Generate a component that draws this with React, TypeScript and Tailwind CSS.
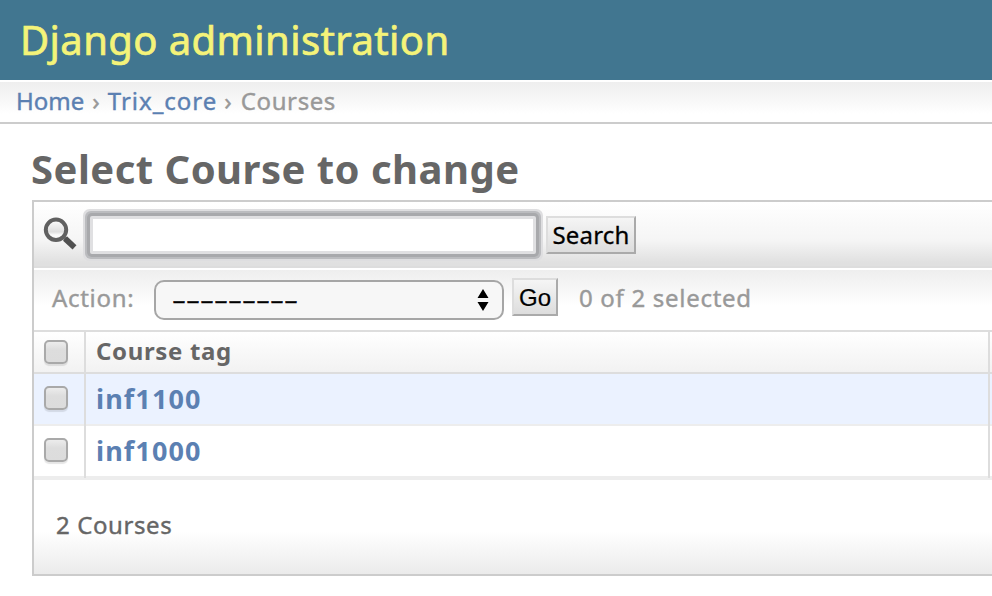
const font = "font-['Lucida_Grande','Noto_Sans',sans-serif]";

function Check() {
  return (
    <span className="block h-6 w-6 rounded-[5px] border-2 border-[#a9a9a9] bg-linear-to-b from-[#ececec] via-[#dddddd] via-40% to-[#dcdcdc] shadow-[0_2px_1px_rgba(0,0,0,0.1)]" />
  );
}

function SearchIcon() {
  return (
    <svg className="ml-[9px] block h-9 w-9 shrink-0" viewBox="0 0 36 36" fill="none">
      <defs>
        <linearGradient id="lens" x1="0" y1="0" x2="0" y2="1">
          <stop offset="0" stopColor="#fff" />
          <stop offset="0.6" stopColor="#dedede" />
          <stop offset="0.75" stopColor="#fafafa" />
        </linearGradient>
      </defs>
      <path d="M19.5 20l4 4" stroke="#777" strokeWidth="3.5" />
      <path d="M22 22.5l9.5 8.8" stroke="#505050" strokeWidth="5.8" />
      <circle cx="13" cy="13.8" r="10.2" fill="url(#lens)" stroke="#606060" strokeWidth="4" />
    </svg>
  );
}

function Row({ name, className }: { name: string; className: string }) {
  return (
    <div className={`flex h-[52px] border-b-2 border-[#ededed] ${className}`}>
      <div className="-mb-0.5 flex w-[52px] border-r-2 border-[#dddddd] pt-3 pl-2.5">
        <Check />
      </div>
      <div className="-mb-0.5 w-[904px] border-r-2 border-[#dddddd] pl-2.5 text-[27px] leading-[49px] font-bold tracking-[1.1px] text-[#5b80b2]">
        {name}
      </div>
    </div>
  );
}

export default function App() {
  return (
    <div className={`h-[596px] w-[992px] overflow-hidden bg-white whitespace-nowrap text-[#666666] ${font}`}>
      <header className="h-20 bg-[#417690] pl-5 text-[40px] leading-[80px] text-[#f4f379] [-webkit-text-stroke:0.7px]">
        <span className="tracking-[0.4px]">Django administration</span>
      </header>
      <nav className="mt-0.5 flex h-[42px] border-b-2 border-[#cccccc] bg-linear-to-b from-[#eeeeee] to-white to-80% pl-4 text-[24px] leading-[38px] text-[#999999] [-webkit-text-stroke:0.4px]">
        <span className="text-[#5b80b2]">Home</span>
        <span className="pr-[8px] pl-[8px]">›</span>
        <span className="tracking-[1px] text-[#5b80b2]">Trix_core</span>
        <span className="pr-[9px] pl-[7px]">›</span>
        <span className="tracking-[0.6px]">Courses</span>
      </nav>
      <h1 className="mt-[15px] h-[61px] pl-[31px] text-[40px] leading-[60px] font-bold tracking-[0.48px]">Select Course to change</h1>
      <main className="ml-8 h-[376px] border-2 border-r-0 border-[#cccccc]">
        <div className="flex h-[66px] border-b-2 border-[#dddddd] bg-linear-to-b from-white via-[#f5f5f5] via-60% to-[#e0e0e0] to-95%">
          <div className="pt-[14px]"><SearchIcon /></div>
          <div className="mt-[14px] ml-[11px] h-[38px] w-[446px] rounded-[2px] border-3 border-[#e0e0e2] bg-white shadow-[0_0_0_3px_#a8a9ac,0_0_0_5px_#bbbcbf,0_0_0_7px_#dedee0]" />
          <button className="mt-[14px] ml-2.5 h-[38px] w-[90px] border-2 border-[#dddddd] border-r-[#aaaaaa] border-b-[#aaaaaa] bg-linear-to-b from-[#f5f5f5] to-[#dddddd] text-[24px] leading-[34px] tracking-[0.2px] text-black [-webkit-text-stroke:0.3px]">
            Search
          </button>
        </div>
        <div className="mt-0.5 flex h-[62px] border-b-2 border-[#dddddd] bg-linear-to-b from-[#eeeeee] to-white to-60% text-[24px] leading-[56px] text-[#999999] [-webkit-text-stroke:0.4px]">
          <span className="w-[120px] pl-[18px] tracking-[0.7px]">Action:</span>
          <div className="mt-2.5 flex h-10 w-[350px] justify-between rounded-[10px] border-2 border-[#a6a6a6] bg-[#f7f7f7] pr-[13px] pl-4 text-black">
            <span className="origin-left scale-x-181 leading-[33px]">---------</span>
            <svg className="mt-[7px] h-[22px] w-3" viewBox="0 0 12 22"><path d="M6 0l5.5 9H.5zM6 22l5.5-9H.5z" /></svg>
          </div>
          <button className="mt-2 ml-2 h-[38px] w-[46px] border-2 border-[#dddddd] border-r-[#aaaaaa] border-b-[#aaaaaa] bg-linear-to-b from-[#f5f5f5] to-[#dddddd] font-['Liberation_Sans',sans-serif] text-[24px] leading-[36px] text-black [-webkit-text-stroke:0.2px]">
            Go
          </button>
          <span className="ml-[21px] tracking-[0.7px]">0 of 2 selected</span>
        </div>
        <div className="flex h-[42px] border-b-2 border-[#dddddd] bg-linear-to-b from-white to-[#f2f2f2]">
          <div className="flex w-[52px] border-r-2 border-[#dddddd] pt-2 pl-2.5"><Check /></div>
          <div className="w-[904px] border-r-2 border-[#dddddd] pl-2.5 text-[24px] leading-[38px] font-bold tracking-[0.65px]">Course tag</div>
        </div>
        <Row name="inf1100" className="bg-[#ebf2ff]" />
        <Row name="inf1000" className="bg-white" />
        <footer className="h-24 border-t-2 border-[#ededed] bg-linear-to-b from-white from-55% to-[#ebebeb] pl-[22px] text-[24px] leading-[90px] tracking-[0.6px] [-webkit-text-stroke:0.4px]">2 Courses</footer>
      </main>
    </div>
  );
}
